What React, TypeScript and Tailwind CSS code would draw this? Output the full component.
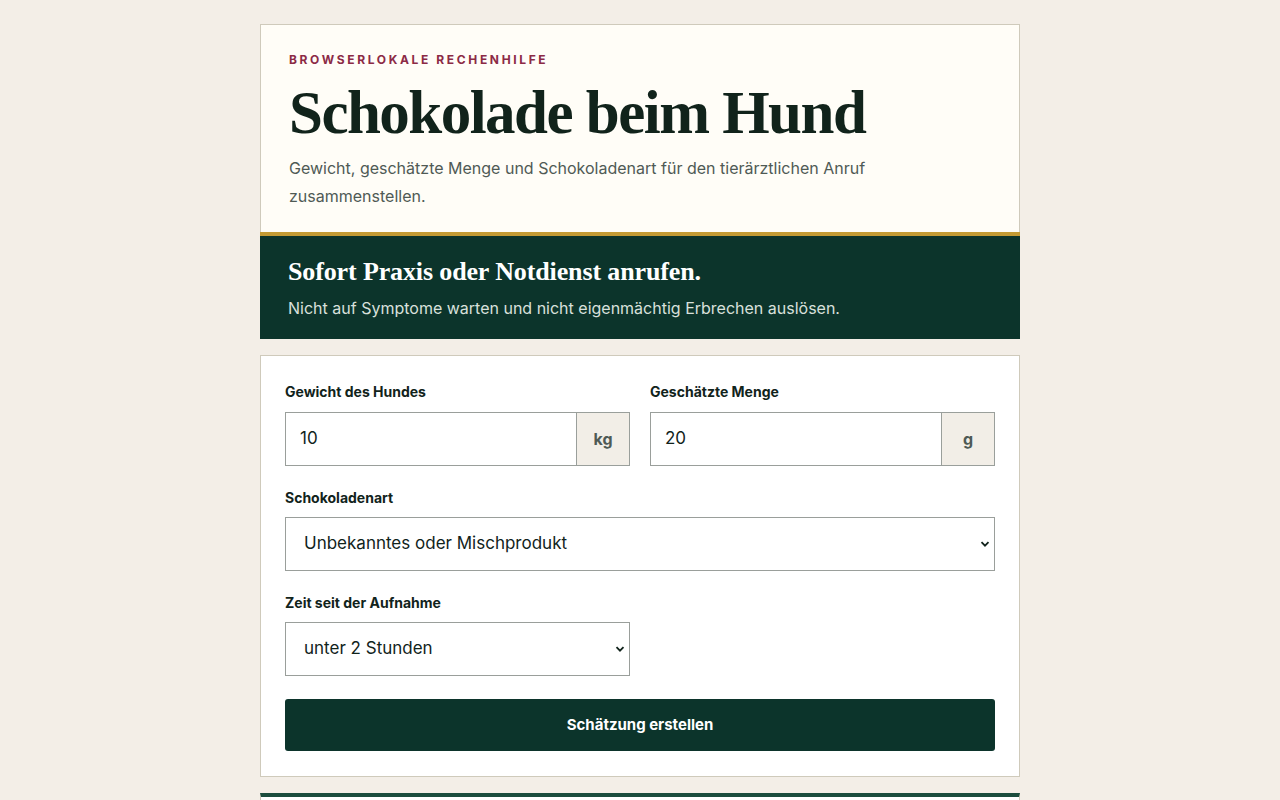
import React from "react";

const serif = { fontFamily: '"Liberation Serif", "DejaVu Serif", serif' };

function Chevron() {
  return (
    <svg className="pointer-events-none absolute right-[5px] top-1/2 -translate-y-1/2" width="10" height="10" viewBox="0 0 10 10">
      <path d="M1.5 3.2 L5 6.7 L8.5 3.2" fill="none" stroke="#11231b" strokeWidth="1.8" />
    </svg>
  );
}

export default function App() {
  return (
    <div className="min-h-screen bg-[#f3eee7] pt-6 pb-10" style={{ fontFamily: 'Inter, "Noto Sans", sans-serif' }}>
      <div className="mx-auto w-[760px]">
        <header className="border border-[#cfcabb] border-b-0 bg-[#fffdf7] px-7 pt-[27px] pb-[22px]">
          <div className="text-[12px] font-bold uppercase tracking-[0.22em] text-[#8c2a45] leading-[16px]">
            Browserlokale Rechenhilfe
          </div>
          <h1
            className="mt-[13px] text-[61px] font-bold leading-[64px] tracking-[-0.025em] text-[#11231b]"
            style={serif}
          >
            Schokolade beim Hund
          </h1>
          <p className="mt-[9px] max-w-[600px] text-[16px] leading-[28px] text-[#4f5a55]">
            Gewicht, geschätzte Menge und Schokoladenart für den tierärztlichen Anruf zusammenstellen.
          </p>
        </header>
        <section className="border-t-4 border-[#c49a33] bg-[#0c342b] px-7 pt-[21px] pb-[19px]">
          <h2 className="text-[26px] font-bold leading-[30px] tracking-[-0.005em] text-white" style={serif}>
            Sofort Praxis oder Notdienst anrufen.
          </h2>
          <p className="mt-[9px] text-[16px] leading-[24px] text-[#d9e0dc]">
            Nicht auf Symptome warten und nicht eigenmächtig Erbrechen auslösen.
          </p>
        </section>

        <form className="mt-4 border border-[#cfcabb] bg-white px-6 pt-[27px] pb-[25px]">
          <div className="grid grid-cols-2 gap-5">
            <div>
              <label className="block text-[14px] font-bold leading-[18px] text-[#11231b]">Gewicht des Hundes</label>
              <div className="mt-[11px] flex h-[54px] border border-[#9a9f9b]">
                <input
                  defaultValue="10"
                  className="min-w-0 flex-1 bg-white px-[14px] text-[17px] text-[#11231b] outline-none"
                />
                <span className="flex w-[53px] items-center justify-center border-l border-[#9a9f9b] bg-[#f2eee7] text-[16px] font-bold text-[#4f5a55]">
                  kg
                </span>
              </div>
            </div>
            <div>
              <label className="block text-[14px] font-bold leading-[18px] text-[#11231b]">Geschätzte Menge</label>
              <div className="mt-[11px] flex h-[54px] border border-[#9a9f9b]">
                <input
                  defaultValue="20"
                  className="min-w-0 flex-1 bg-white px-[14px] text-[17px] text-[#11231b] outline-none"
                />
                <span className="flex w-[53px] items-center justify-center border-l border-[#9a9f9b] bg-[#f2eee7] text-[16px] font-bold text-[#4f5a55]">
                  g
                </span>
              </div>
            </div>
          </div>

          <div className="mt-[23px]">
            <label className="block text-[14px] font-bold leading-[18px] text-[#11231b]">Schokoladenart</label>
            <div className="relative mt-[10px]">
              <select className="h-[54px] w-full appearance-none border border-[#9a9f9b] bg-white px-[18px] text-[17px] text-[#11231b] outline-none">
                <option>Unbekanntes oder Mischprodukt</option>
              </select>
              <Chevron />
            </div>
          </div>

          <div className="mt-[23px]">
            <label className="block text-[14px] font-bold leading-[18px] text-[#11231b]">Zeit seit der Aufnahme</label>
            <div className="relative mt-[10px] w-[345px]">
              <select className="h-[54px] w-full appearance-none border border-[#9a9f9b] bg-white px-[18px] text-[17px] text-[#11231b] outline-none">
                <option>unter 2 Stunden</option>
              </select>
              <Chevron />
            </div>
          </div>

          <button
            type="button"
            className="mt-[23px] h-[52px] w-full rounded-[3px] bg-[#0c342b] text-[15px] font-bold text-white"
          >
            Schätzung erstellen
          </button>
        </form>

        <section className="mt-4 h-[200px] border-t-4 border-[#1b4d3e] bg-white border-x border-x-[#cfcabb]"></section>
      </div>
    </div>
  );
}
